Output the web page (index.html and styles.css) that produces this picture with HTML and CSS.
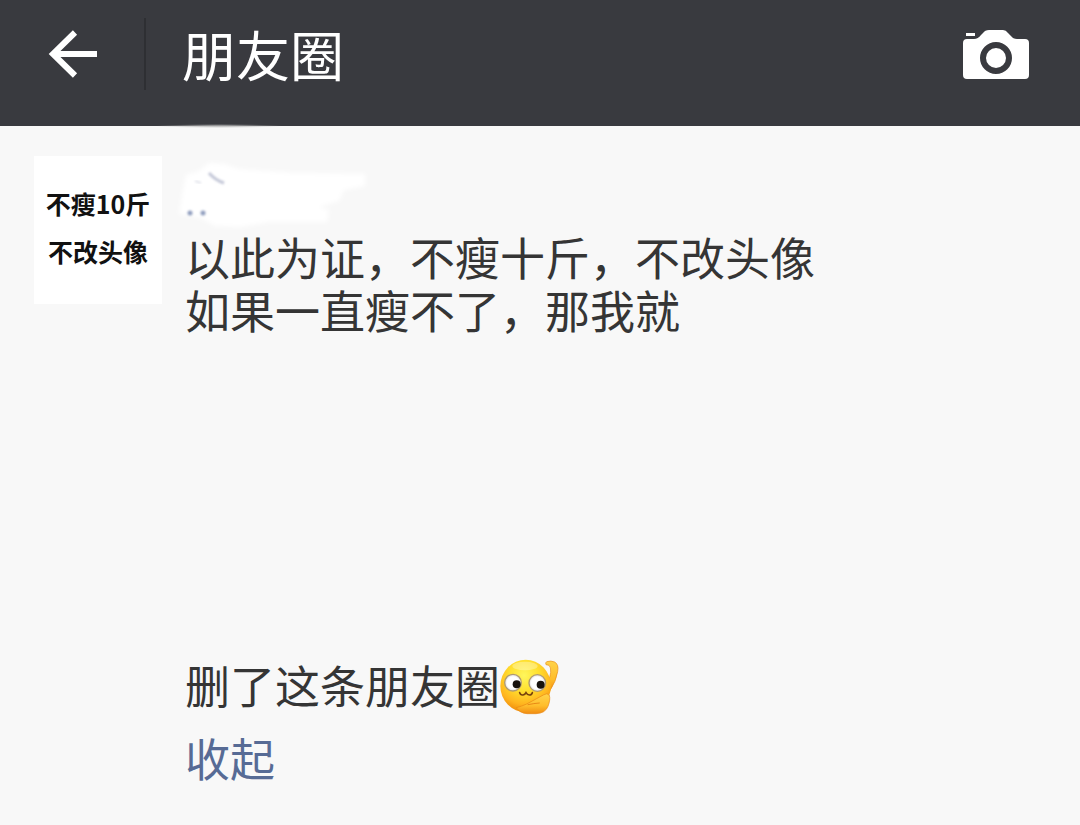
FILE: index.html
```html
<!DOCTYPE html>
<html lang="zh-CN">
<head>
<meta charset="utf-8">
<meta name="viewport" content="width=device-width, initial-scale=1">
<title>朋友圈</title>
<link rel="stylesheet" href="styles.css">
</head>
<body>
<header class="topbar">
  <button class="back" type="button" aria-label="返回">
    <svg width="50" height="50" viewBox="0 0 50 50" aria-hidden="true"><path d="M27 3.500 5 25 27 46.500M5 25H49" fill="none" stroke="#fff" stroke-width="6"/></svg>
  </button>
  <h1 class="title">朋友圈</h1>
  <button class="camera" type="button" aria-label="拍照">
    <svg width="66" height="50" viewBox="0 0 66 50" aria-hidden="true"><path fill="#fff" fill-rule="evenodd" d="M3 3h9v3H3zM4 9H11Q15 9 18 5L20 3Q22 0 26 0H40Q43 0 45 3L48 6Q50 9 54 9H62Q66 9 66 13V45Q66 49 62 49H4Q0 49 0 45V13Q0 9 4 9ZM33 12a16 16 0 1 0 0 32a16 16 0 1 0 0-32ZM33 18a10 10 0 1 1 0 20a10 10 0 1 1 0-20Z"/></svg>
  </button>
  <svg class="smudge" width="150" height="6" viewBox="0 0 150 6" aria-hidden="true"><defs><radialGradient id="sm"><stop offset="0" stop-color="#b4b4b4"/><stop offset="1" stop-color="#b4b4b4" stop-opacity="0"/></radialGradient></defs><ellipse cx="75" cy="3" rx="65" ry="2" fill="url(#sm)"/></svg>
</header>
<main class="post">
  <div class="avatar"><span>不瘦10斤</span><span>不改头像</span></div>
  <article class="content">
    <svg class="name" width="200" height="74" viewBox="0 0 200 74" aria-hidden="true">
      <defs><filter id="soft" x="-10%" y="-10%" width="120%" height="120%"><feGaussianBlur stdDeviation="2"/></filter><filter id="fine" x="-50%" y="-50%" width="200%" height="200%"><feGaussianBlur stdDeviation="1"/></filter></defs>
      <path filter="url(#soft)" fill="#fff" d="M7 19 20 15 30 7 45 8 60 13 115 17 186 18 186 30 165 34 160 45 140 51 150 54 148 66 90 66 62 71 36 70 22 62 0 58 3 40Z"/>
      <path filter="url(#fine)" d="M30 17Q36 24 45 27" fill="none" stroke="#c4c8d8" stroke-width="3"/>
      <path filter="url(#fine)" d="M16 25 22 27" fill="none" stroke="#e3e5ec" stroke-width="2"/>
      <g filter="url(#fine)" fill="#8f9dbe"><circle cx="11" cy="57" r="2.500"/><circle cx="24" cy="57" r="2.500"/></g>
    </svg>
    <p class="text">以此为证，不瘦十斤，不改头像
如果一直瘦不了，那我就






删了这条朋友圈<svg class="emoji" width="59" height="58" viewBox="63 57 177 174" role="img" aria-label="捂脸张望">
<defs>
<radialGradient id="face" cx=".47" cy=".3" r=".72"><stop offset="0" stop-color="#fff65c"/><stop offset=".4" stop-color="#ffe02f"/><stop offset=".75" stop-color="#ffb51f"/><stop offset="1" stop-color="#ed8608"/></radialGradient>
<linearGradient id="hand" x1="0" y1="0" x2="0" y2="1"><stop offset="0" stop-color="#ffd34a"/><stop offset=".6" stop-color="#ffbd2b"/><stop offset="1" stop-color="#f08c12"/></linearGradient>
<radialGradient id="eye"><stop offset=".7" stop-color="#fff"/><stop offset="1" stop-color="#dcdce0"/></radialGradient>
</defs>
<path d="M203 68Q216 64 227 69 240 76 236 98 232 126 211 158L196 145Q212 126 215 100 216 84 210 79L201 77Q198 71 203 68Z" fill="url(#hand)" stroke="#e98c15" stroke-width="2"/>
<ellipse cx="140" cy="141" rx="76" ry="79" fill="url(#face)"/>
<ellipse cx="138" cy="81" rx="38" ry="13" fill="#fff" opacity=".3"/>
<circle cx="102" cy="131" r="25" fill="url(#eye)" stroke="#b09a70" stroke-width="4"/>
<circle cx="175" cy="132" r="25" fill="url(#eye)" stroke="#b09a70" stroke-width="4"/>
<circle cx="113" cy="136" r="12" fill="#17120d"/><circle cx="185" cy="137" r="12" fill="#17120d"/>
<path d="M122 161Q124 169 132 168 138 167 141 161 145 168 151 168 158 168 160 161" fill="none" stroke="#78420d" stroke-width="5" stroke-linecap="round"/>
<path d="M112 206Q128 202 143 195L193 168Q205 160 211 169 215 181 207 202 199 223 171 224H144Q122 222 112 206Z" fill="url(#hand)" stroke="#e98612" stroke-width="2"/>
<path d="M147 197Q165 193 181 192" fill="none" stroke="#e98a15" stroke-width="3" stroke-linecap="round"/>
</svg></p>
    <a class="collapse" href="#">收起</a>
  </article>
</main>
</body>
</html>
```
FILE: styles.css
```css
* {
  box-sizing: border-box;
}

body {
  margin: 0;
  background: #f8f8f8;
  color: #353535;
  font-family: "Noto Sans CJK SC", sans-serif;
}

button {
  padding: 0;
  border: 0;
  background: none;
  cursor: pointer;
}

svg {
  display: block;
}

.topbar {
  position: relative;
  display: flex;
  align-items: flex-start;
  height: 126px;
  padding: 18px 51px 0 0;
  background: #393a3f;
  color: #fff;
}

.back {
  display: flex;
  align-items: center;
  width: 146px;
  height: 72px;
  padding-left: 48px;
  border-right: 2px solid #2e2f33;
}

.title {
  flex: 1;
  margin: 0;
  padding-left: 36px;
  font-size: 54px;
  font-weight: 400;
  line-height: 72px;
}

.camera {
  margin-top: 12px;
}

.smudge {
  position: absolute;
  left: 144px;
  bottom: -3px;
}

.post {
  display: flex;
  align-items: flex-start;
  gap: 23px;
  padding: 30px 34px;
}

.avatar {
  display: flex;
  flex: none;
  flex-direction: column;
  align-items: center;
  width: 128px;
  padding: 23px 0 29px;
  background: #fff;
  color: #111;
  font-size: 25px;
  font-weight: 700;
  line-height: 48px;
  white-space: nowrap;
}

.content {
  flex: 1;
  min-width: 0;
}

.name {
  margin-left: -6px;
  overflow: visible;
}

.text {
  margin: 0;
  font-size: 45px;
  line-height: 53px;
  white-space: pre-wrap;
}

.emoji {
  display: inline-block;
  margin-top: 4px;
  vertical-align: -12px;
}

.collapse {
  display: inline-block;
  margin-top: 12px;
  color: #576b95;
  font-size: 45px;
  line-height: 60px;
  text-decoration: none;
}
```
